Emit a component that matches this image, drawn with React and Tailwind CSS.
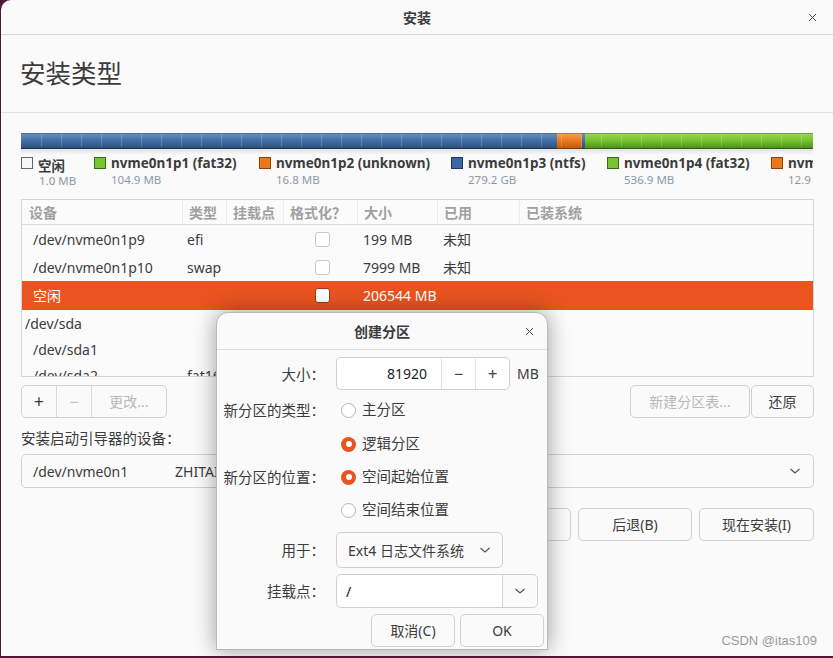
import React from "react";

const FONT = "font-['Noto_Sans','Noto_Sans_CJK_SC',sans-serif]";
const CJK = "font-['Noto_Sans_CJK_SC',sans-serif]";

function Chevron({ color = "#555" }) {
  return (
    <svg width="12" height="8" viewBox="0 0 12 8">
      <path d="M1.5 2 L6 6 L10.5 2" stroke={color} fill="none" strokeWidth="1.2" />
    </svg>
  );
}

function CloseX({ size = 10 }) {
  return (
    <svg width={size} height={size} viewBox="0 0 10 10">
      <path d="M1 1L9 9M9 1L1 9" stroke="#444" strokeWidth="1.1" />
    </svg>
  );
}

function PartBar() {
  const segs = [
    { x: 0, w: 536, id: "b" },
    { x: 536, w: 25, id: "o" },
    { x: 561, w: 3, id: "b" },
    { x: 564, w: 228, id: "g" },
  ];
  const ticks = [];
  for (let x = 20; x < 792; x += 20) ticks.push(x);
  return (
    <svg width="792" height="16" viewBox="0 0 792 16" className="block">
      <defs>
        <linearGradient id="b" x1="0" y1="0" x2="0" y2="1">
          <stop offset="0" stopColor="#6e93c2" />
          <stop offset="0.45" stopColor="#4470a8" />
          <stop offset="1" stopColor="#2a4c7a" />
        </linearGradient>
        <linearGradient id="o" x1="0" y1="0" x2="0" y2="1">
          <stop offset="0" stopColor="#f5a25a" />
          <stop offset="0.45" stopColor="#ec7a22" />
          <stop offset="1" stopColor="#b9570f" />
        </linearGradient>
        <linearGradient id="g" x1="0" y1="0" x2="0" y2="1">
          <stop offset="0" stopColor="#9ad65e" />
          <stop offset="0.45" stopColor="#76c42f" />
          <stop offset="1" stopColor="#4b8c18" />
        </linearGradient>
      </defs>
      {segs.map((s, i) => (
        <rect key={i} x={s.x} y="0" width={s.w} height="16" fill={`url(#${s.id})`} />
      ))}
      {ticks.map((x) => (
        <line key={x} x1={x + 0.5} y1="1" x2={x + 0.5} y2="14" stroke="rgba(255,255,255,0.18)" strokeWidth="1" />
      ))}
      <rect x="0" y="0" width="792" height="1" fill="rgba(0,0,0,0.25)" />
      <rect x="0" y="15" width="792" height="1" fill="rgba(0,0,0,0.35)" />
    </svg>
  );
}

function LegendItem({ color, border, name, size, w, free }) {
  return (
    <div className={`flex shrink-0 ${w}`}>
      <div className={`w-[12px] h-[12px] mt-[2px] shrink-0 border ${border} ${color}`} />
      <div className="ml-[5px] flex flex-col">
        <span
          className={`text-[13.5px] font-bold leading-[17px] text-[#3c3c3c] whitespace-nowrap ${
            free ? `mt-[2px] ${CJK}` : ""
          }`}
        >
          {name}
        </span>
        <span className={`text-[11.5px] leading-[15px] text-[#8a99a8] whitespace-nowrap ${free ? "ml-[1px] -mt-[1px]" : ""}`}>
          {size}
        </span>
      </div>
    </div>
  );
}

function Check({ selected }) {
  return (
    <div
      className={`w-[15px] h-[15px] rounded-[3px] border ${
        selected ? "bg-white border-[#a33a10]" : "bg-white border-[#c8c8c8]"
      }`}
    />
  );
}

const COLS = "grid grid-cols-[161px_44px_57px_74px_80px_82px_1fr]";

function Row({ dev, type, size, used, selected, check, devPad = "pl-[11px]", h = "h-[28px]" }) {
  return (
    <div
      className={`${COLS} ${h} items-center text-[14px] ${
        selected ? "bg-[#e95420] text-white" : "text-[#3c3c3c]"
      }`}
    >
      <div className={`${devPad} whitespace-nowrap`}>{dev}</div>
      <div className="pl-[4px] whitespace-nowrap">{type}</div>
      <div />
      <div className="flex justify-center pl-[3px]">{check && <Check selected={selected} />}</div>
      <div className="pl-[5px] whitespace-nowrap">{size}</div>
      <div className="pl-[5px] whitespace-nowrap">{used}</div>
      <div />
    </div>
  );
}

function Btn({ children, className = "", disabled }) {
  return (
    <div
      className={`h-[33px] flex items-center justify-center rounded-[5px] border border-[#d0d0d0] bg-[#fafafa] text-[14px] ${
        disabled ? "text-[#b8b8b8]" : "text-[#3c3c3c]"
      } ${className}`}
    >
      {children}
    </div>
  );
}

function Radio({ on }) {
  return on ? (
    <div className="w-[15px] h-[15px] rounded-full bg-[#e95420] flex items-center justify-center">
      <div className="w-[6px] h-[6px] rounded-full bg-white" />
    </div>
  ) : (
    <div className="w-[15px] h-[15px] rounded-full bg-white border border-[#b5b5b5]" />
  );
}

function Label({ children }) {
  return (
    <div className={`w-[111px] pr-[3px] text-right shrink-0 whitespace-nowrap text-[14.5px] ${CJK}`}>{children}</div>
  );
}

function Dialog() {
  return (
    <div className="absolute left-[215px] top-[312px] w-[332px] h-[338px] bg-[#fafafa] rounded-t-[12px] border border-[#b8b8b8] shadow-[0_0_22px_rgba(0,0,0,0.38)] flex flex-col">
      <div className="h-[37px] border-b border-[#dcdcdc] flex items-center justify-center relative shrink-0">
        <span className="text-[14px] font-bold text-[#3c3c3c] mt-[1px]">创建分区</span>
        <div className="absolute right-[13px] top-[14px]">
          <CloseX size={9} />
        </div>
      </div>
      <div className="flex flex-col text-[14px] text-[#3c3c3c]">
        <div className="flex items-center mt-[7px] h-[33px]">
          <Label>大小：</Label>
          <div className="ml-[8px] w-[174px] h-[33px] rounded-[5px] border border-[#cfcfcf] bg-white flex">
            <div className="w-[104px] flex items-center justify-end pr-[14px] text-[#222]">81920</div>
            <div className="w-[34px] border-l border-[#e2e2e2] flex items-center justify-center text-[16px] text-[#444]">−</div>
            <div className="flex-1 border-l border-[#e2e2e2] flex items-center justify-center text-[17px] text-[#444]">+</div>
          </div>
          <div className="ml-[7px]">MB</div>
        </div>
        <div className="flex items-center mt-[4px] h-[32px]">
          <Label>新分区的类型：</Label>
          <div className="ml-[13px] flex items-center gap-[6px]">
            <Radio />
            <span className="text-[14.5px]">主分区</span>
          </div>
        </div>
        <div className="flex items-center mt-[2px] h-[32px]">
          <div className="w-[111px] shrink-0" />
          <div className="ml-[13px] flex items-center gap-[6px]">
            <Radio on />
            <span className="text-[14.5px]">逻辑分区</span>
          </div>
        </div>
        <div className="flex items-center mt-[1px] h-[32px]">
          <Label>新分区的位置：</Label>
          <div className="ml-[13px] flex items-center gap-[6px]">
            <Radio on />
            <span className="text-[14.5px]">空间起始位置</span>
          </div>
        </div>
        <div className="flex items-center mt-[1px] h-[32px]">
          <div className="w-[111px] shrink-0" />
          <div className="ml-[13px] flex items-center gap-[6px]">
            <Radio />
            <span className="text-[14.5px]">空间结束位置</span>
          </div>
        </div>
        <div className="flex items-center mt-[6px] h-[36px]">
          <Label>用于：</Label>
          <div className="ml-[8px] w-[167px] h-[36px] rounded-[5px] border border-[#cfcfcf] bg-[#fafafa] flex items-center pl-[11px] pr-[11px] justify-between">
            <span className="whitespace-nowrap">Ext4 日志文件系统</span>
            <Chevron />
          </div>
        </div>
        <div className="flex items-center mt-[6px] h-[34px]">
          <Label>挂载点：</Label>
          <div className="ml-[8px] w-[202px] h-[34px] rounded-[5px] border border-[#cfcfcf] bg-white flex">
            <div className="flex-1 flex items-center pl-[9px] text-[#111]">/</div>
            <div className="w-[35px] border-l border-[#d8d8d8] bg-[#fafafa] rounded-r-[5px] flex items-center justify-center">
              <Chevron />
            </div>
          </div>
        </div>
        <div className="flex justify-end gap-[5px] mt-[6px] pr-[3px]">
          <Btn className="w-[84px]">取消(C)</Btn>
          <Btn className="w-[84px]">OK</Btn>
        </div>
      </div>
    </div>
  );
}

export default function App() {
  return (
    <div className={`w-[833px] h-[658px] bg-[#4e1739] pl-[1px] pb-[2px] overflow-hidden ${FONT}`}>
      <div className="relative w-[832px] h-[656px] bg-[#fafafa] rounded-tl-[10px] overflow-hidden flex flex-col">
        <div className="h-[35px] shrink-0 border-b border-[#d6d6d6] flex items-center justify-center relative">
          <span className="text-[14px] font-bold text-[#3c3c3c]">安装</span>
          <div className="absolute right-[16px] top-[13px]">
            <CloseX size={9} />
          </div>
        </div>
        <div className="h-[78px] shrink-0 border-b border-[#e2e2e2] flex items-center pl-[19px]">
          <span className="text-[25.5px] text-[#3c3c3c]">安装类型</span>
        </div>
        <div className="pl-[20px] pr-[19px] flex flex-col">
          <div className="mt-[20px] w-[792px]">
            <PartBar />
            <div className="h-[6px] bg-[linear-gradient(to_bottom,rgba(90,120,150,0.18),rgba(250,250,250,0))]" />
          </div>
          <div className="flex h-[41px] overflow-hidden w-[792px]">
            <LegendItem free w="w-[73px]" color="bg-[#f6f6f6]" border="border-[#666]" name="空闲" size="1.0 MB" />
            <LegendItem w="w-[165px]" color="bg-[#74c62b]" border="border-[#3a6d12]" name="nvme0n1p1 (fat32)" size="104.9 MB" />
            <LegendItem w="w-[192px]" color="bg-[#ee7616]" border="border-[#8c430a]" name="nvme0n1p2 (unknown)" size="16.8 MB" />
            <LegendItem w="w-[156px]" color="bg-[#3b68a4]" border="border-[#1f3a60]" name="nvme0n1p3 (ntfs)" size="279.2 GB" />
            <LegendItem w="w-[164px]" color="bg-[#74c62b]" border="border-[#3a6d12]" name="nvme0n1p4 (fat32)" size="536.9 MB" />
            <LegendItem w="w-[120px]" color="bg-[#ee7616]" border="border-[#8c430a]" name="nvme0n1p5" size="12.9 GB" />
          </div>
          <div className="mt-[3px] w-[793px] h-[178px] border border-[#d6d6d6] bg-[#fbfbfb] overflow-hidden">
            <div className={`${COLS} h-[25px] border-b border-[#dcdcdc] text-[14px] font-bold text-[#a0a0a0] ${CJK}`}>
              {["设备", "类型", "挂载点", "格式化？", "大小", "已用", "已装系统"].map((t, i) => (
                <div
                  key={t}
                  className={`flex items-center whitespace-nowrap ${i === 0 ? "pl-[7px]" : "pl-[6px]"} ${
                    i < 6 ? "border-r border-[#ececec]" : ""
                  }`}
                >
                  {t}
                </div>
              ))}
            </div>
            <Row dev="/dev/nvme0n1p9" type="efi" size="199 MB" used="未知" check />
            <Row dev="/dev/nvme0n1p10" type="swap" size="7999 MB" used="未知" check />
            <Row dev="空闲" size="206544 MB" check selected h="h-[29px]" />
            <Row dev="/dev/sda" devPad="pl-[3px]" h="h-[26px]" />
            <Row dev="/dev/sda1" h="h-[26px]" />
            <Row dev="/dev/sda2" type="fat16" h="h-[26px]" />
          </div>
          <div className="flex mt-[8px] h-[33px]">
            <div className="flex h-[33px] rounded-[5px] border border-[#d0d0d0] text-[14px]">
              <div className="w-[35px] flex items-center justify-center text-[18px] text-[#3c3c3c] border-r border-[#d8d8d8]">+</div>
              <div className="w-[35px] flex items-center justify-center text-[16px] text-[#c0c0c0] border-r border-[#d8d8d8]">−</div>
              <div className="w-[74px] flex items-center justify-center text-[#b8b8b8]">更改...</div>
            </div>
            <div className="flex-1" />
            <Btn disabled className="w-[120px]">新建分区表...</Btn>
            <Btn className="w-[63px] ml-[1px]">还原</Btn>
          </div>
          <div className={`mt-[11px] text-[14.5px] text-[#3c3c3c] leading-[18px] ${CJK}`}>安装启动引导器的设备：</div>
          <div className="mt-[7px] h-[34px] w-[793px] rounded-[5px] border border-[#d0d0d0] flex items-center text-[14px] text-[#3c3c3c]">
            <span className="pl-[11px] w-[153px]">/dev/nvme0n1</span>
            <span>ZHITAI TiPlus5000 512GB (512.1 GB)</span>
            <div className="flex-1" />
            <div className="pr-[12px]">
              <Chevron />
            </div>
          </div>
          <div className="flex justify-end gap-[7px] mt-[20px] w-[793px]">
            <Btn className="w-[114px]">退出(Q)</Btn>
            <Btn className="w-[114px]">后退(B)</Btn>
            <Btn className="w-[115px]">现在安装(I)</Btn>
          </div>
        </div>
        <Dialog />
        <div className="absolute right-[16px] bottom-[6px] text-[13px] text-[#9a9a9a] font-['Liberation_Sans',sans-serif]">
          CSDN @itas109
        </div>
      </div>
    </div>
  );
}
